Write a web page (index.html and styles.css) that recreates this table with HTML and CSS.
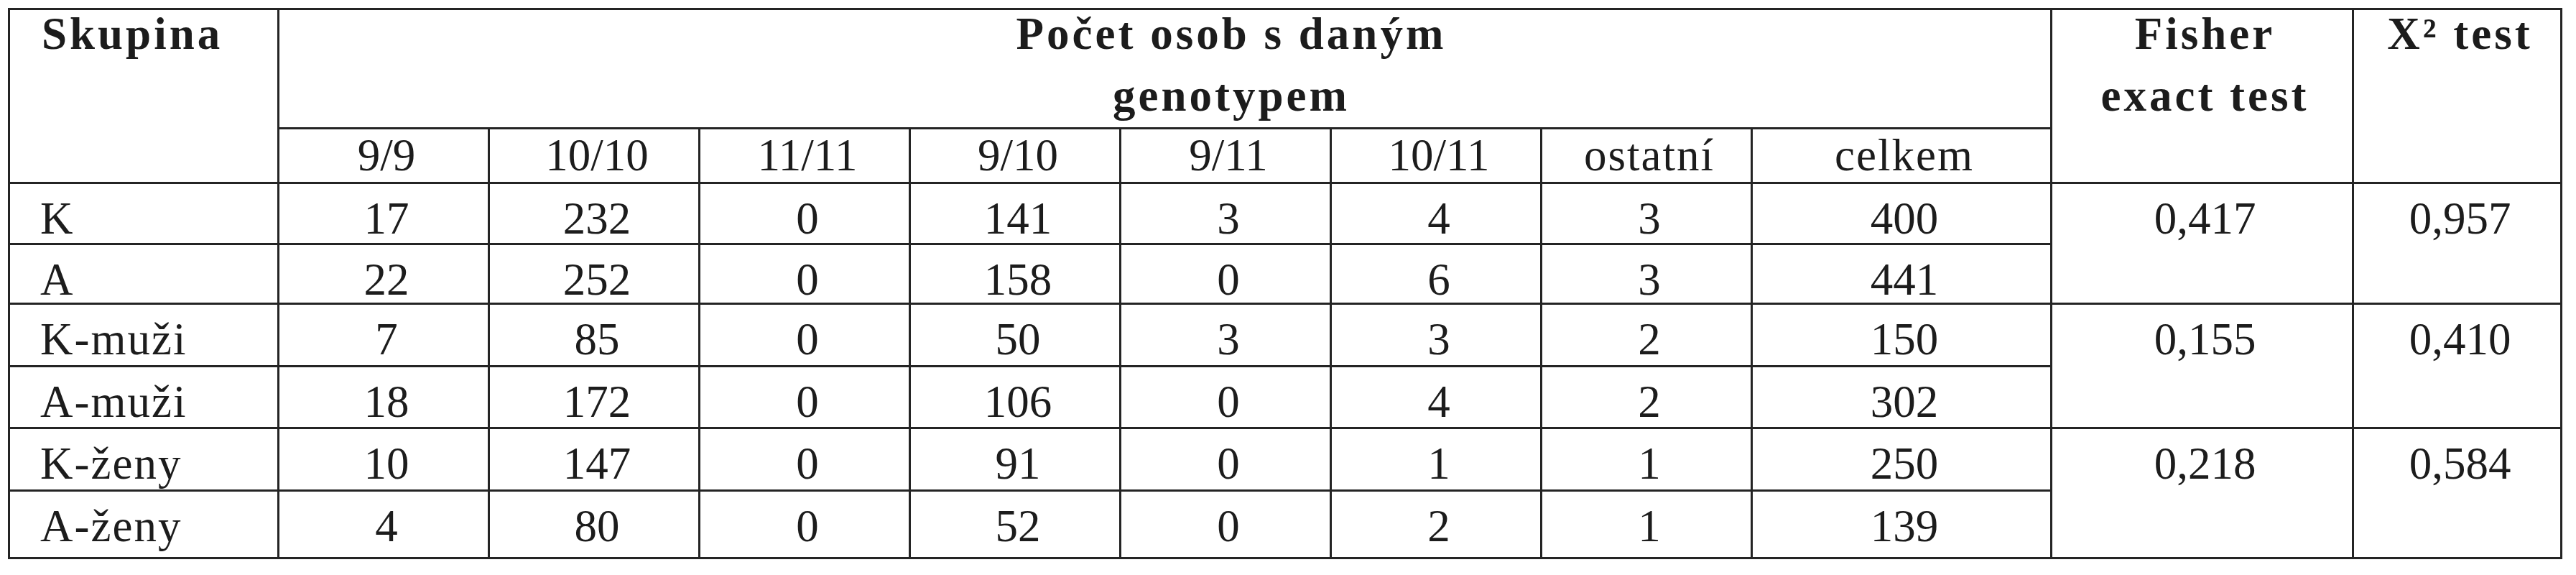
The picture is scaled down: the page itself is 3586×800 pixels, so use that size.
FILE: index.html
```html
<!DOCTYPE html>
<html lang="cs">
<head>
<meta charset="utf-8">
<title>Počet osob s daným genotypem</title>
<link rel="stylesheet" href="styles.css">
</head>
<body>
<div class="tbl">
  <div class="c hd h2 lab"><div class="lines">Skupina</div></div>
  <div class="c hd pocet"><div class="lines">Počet osob s daným<br>genotypem</div></div>
  <div class="c hd h2 mid"><div class="lines">Fisher<br>exact test</div></div>
  <div class="c hd h2 mid"><div class="lines">X² test</div></div>

  <div class="c sub">9/9</div>
  <div class="c sub">10/10</div>
  <div class="c sub">11/11</div>
  <div class="c sub">9/10</div>
  <div class="c sub">9/11</div>
  <div class="c sub">10/11</div>
  <div class="c sub t">ostatní</div>
  <div class="c sub t">celkem</div>

  <div class="c lab t">K</div>
  <div class="c v">17</div><div class="c v">232</div><div class="c v">0</div><div class="c v">141</div><div class="c v">3</div><div class="c v">4</div><div class="c v">3</div><div class="c v">400</div>
  <div class="c v h2">0,417</div><div class="c v h2">0,957</div>

  <div class="c lab t">A</div>
  <div class="c v">22</div><div class="c v">252</div><div class="c v">0</div><div class="c v">158</div><div class="c v">0</div><div class="c v">6</div><div class="c v">3</div><div class="c v">441</div>

  <div class="c lab t">K-muži</div>
  <div class="c v">7</div><div class="c v">85</div><div class="c v">0</div><div class="c v">50</div><div class="c v">3</div><div class="c v">3</div><div class="c v">2</div><div class="c v">150</div>
  <div class="c v h2">0,155</div><div class="c v h2">0,410</div>

  <div class="c lab t">A-muži</div>
  <div class="c v">18</div><div class="c v">172</div><div class="c v">0</div><div class="c v">106</div><div class="c v">0</div><div class="c v">4</div><div class="c v">2</div><div class="c v">302</div>

  <div class="c lab t">K-ženy</div>
  <div class="c v">10</div><div class="c v">147</div><div class="c v">0</div><div class="c v">91</div><div class="c v">0</div><div class="c v">1</div><div class="c v">1</div><div class="c v">250</div>
  <div class="c v h2">0,218</div><div class="c v h2">0,584</div>

  <div class="c lab t">A-ženy</div>
  <div class="c v">4</div><div class="c v">80</div><div class="c v">0</div><div class="c v">52</div><div class="c v">0</div><div class="c v">2</div><div class="c v">1</div><div class="c v">139</div>
</div>
</body>
</html>
```
FILE: styles.css
```css
html, body {
  margin: 0;
  padding: 0;
  background: #ffffff;
}

body {
  font-family: "Liberation Serif", "Times New Roman", serif;
  font-size: 63px;
  color: #1c1c1c;
}

.tbl {
  display: grid;
  width: max-content;
  margin: 11px 0 0 11px;
  padding: 3px;
  gap: 3px;
  background: #242424;
  grid-template-columns: 372px repeat(7, 290px) 414px 417px 287px;
  grid-template-rows: 163px 73px 82px 80px 84px 83px 84px 91px;
}

.c {
  background: #ffffff;
  line-height: 72px;
  white-space: nowrap;
  min-width: 0;
  min-height: 0;
}

.h2 {
  grid-row: span 2;
}

.pocet {
  grid-column: span 8;
  text-align: center;
  padding-left: 185px;
}

.hd {
  font-weight: bold;
  letter-spacing: 4px;
}

.hd .lines {
  line-height: 86px;
  margin-top: -10px;
}

.mid {
  text-align: center;
  padding-left: 8px;
}

.lab {
  text-align: left;
  padding-left: 42px;
}

.hd.lab {
  padding-left: 44px;
}

.sub {
  text-align: center;
  padding-left: 8px;
}

.v {
  text-align: center;
  padding-left: 8px;
  padding-top: 12px;
}

.lab.t {
  padding-top: 12px;
}

.t {
  letter-spacing: 2px;
}
```
